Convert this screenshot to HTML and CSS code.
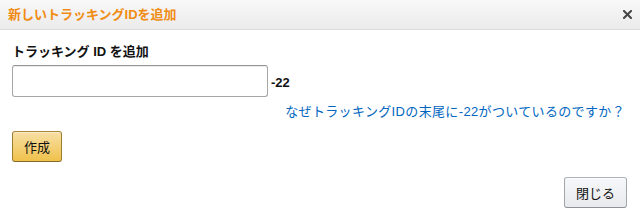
FILE: index.html
```html
<!DOCTYPE html>
<html lang="ja">
<head>
    <meta charset="UTF-8">
    <meta name="viewport" content="width=device-width, initial-scale=1.0">
    <title>新しいトラッキングIDを追加</title>
    <link rel="stylesheet" href="styles.css">
</head>
<body>
    <div class="dialog">
        <div class="dialog-header">
            <h4 class="dialog-title">新しいトラッキングIDを追加</h4>
            <button class="dialog-close" aria-label="閉じる">
                <svg width="9" height="9" viewBox="0 0 9 9">
                    <path d="M1 1 L8 8 M8 1 L1 8" stroke="#444" stroke-width="2" stroke-linecap="square"/>
                </svg>
            </button>
        </div>
        <div class="dialog-body">
            <label class="field-label" for="trackingId">トラッキング ID を追加</label>
            <div class="field-row">
                <input type="text" id="trackingId" value="" />
                <span class="suffix">-22</span>
            </div>
            <div class="help-row">
                <a href="#" class="help-link">なぜトラッキングIDの末尾に-22がついているのですか？</a>
            </div>
            <div class="create-row">
                <button class="btn btn-primary">作成</button>
            </div>
        </div>
        <div class="dialog-footer">
            <button class="btn btn-secondary">閉じる</button>
        </div>
    </div>
</body>
</html>
```

FILE: styles.css
```css
body {
    margin: 0;
    background: #fff;
    font-family: Arial, "Liberation Sans", "Noto Sans CJK JP", sans-serif;
    font-size: 13px;
    color: #111;
}
.dialog {
    width: 640px;
}
.dialog-header {
    display: flex;
    justify-content: space-between;
    align-items: center;
    height: 29px;
    padding: 0 8px;
    background: linear-gradient(to bottom, #f8f8f8, #ebebeb);
    border-bottom: 1px solid #dcdcdc;
}
.dialog-title {
    margin: 0;
    font-size: 13px;
    font-weight: bold;
    color: #f08c13;
    line-height: 29px;
}
.dialog-close {
    border: none;
    background: none;
    padding: 0;
    width: 10px;
    height: 12px;
    display: flex;
    align-items: center;
    justify-content: center;
    margin-top: -1px;
    cursor: pointer;
}
.dialog-body {
    display: flex;
    flex-direction: column;
    padding: 12px 15px 0 12px;
}
.field-label {
    font-weight: bold;
    line-height: 19px;
}
.field-row {
    display: flex;
    align-items: center;
    margin-top: 4px;
}
.field-row input {
    box-sizing: border-box;
    width: 256px;
    height: 32px;
    margin: 0;
    padding: 3px 7px;
    border: 1px solid #a6a6a6;
    border-top-color: #949494;
    border-radius: 3px;
    box-shadow: 0 1px 0 rgba(255, 255, 255, 0.5), 0 1px 0 rgba(0, 0, 0, 0.07) inset;
    font-size: 13px;
    outline: none;
}
.suffix {
    margin-left: 3px;
    font-weight: bold;
    margin-top: 2px;
}
.help-row {
    text-align: right;
    margin-top: 6px;
    line-height: 18px;
}
.help-link {
    color: #0066c0;
    text-decoration: none;
    letter-spacing: 0.35px;
}
.create-row {
    margin-top: 10px;
}
.btn {
    box-sizing: border-box;
    height: 31px;
    border-radius: 3px;
    font-family: inherit;
    font-size: 13px;
    color: #111;
    cursor: pointer;
    padding: 0 10px;
}
.btn-primary {
    width: 50px;
    background: linear-gradient(to bottom, #f7dfa5, #f0c14b);
    border: 1px solid;
    border-color: #a88734 #9c7e31 #846a29;
    box-shadow: 0 1px 0 rgba(255, 255, 255, 0.4) inset;
}
.btn-secondary {
    width: 63px;
    background: linear-gradient(to bottom, #f7f8fa, #e7e9ec);
    border: 1px solid;
    border-color: #adb1b8 #a2a6ac #8d9096;
    box-shadow: 0 1px 0 rgba(255, 255, 255, 0.6) inset;
}
.dialog-footer {
    display: flex;
    justify-content: flex-end;
    padding: 15px 13px 0 12px;
}
```
